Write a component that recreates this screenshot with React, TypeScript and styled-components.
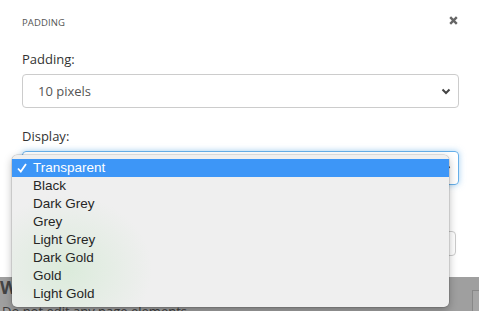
import React from "react";
import styled, { createGlobalStyle } from "styled-components";

const Global = createGlobalStyle`
  html, body { margin: 0; padding: 0; background: #9d9d9d; }
  body { width: 479px; height: 311px; overflow: hidden; font-family: "Open Sans", "Liberation Sans", sans-serif; }
  #root { position: relative; width: 479px; height: 311px; }
`;

const Page = styled.div`
  display: flex;
  flex-direction: column;
  width: 479px;
  height: 311px;
  position: relative;
`;

const Modal = styled.div`
  background: #fff;
  height: 277px;
  box-sizing: border-box;
  padding: 0 20px 0 22px;
  display: flex;
  flex-direction: column;
`;

const Header = styled.div`
  display: flex;
  justify-content: space-between;
  align-items: center;
  height: 44px;
  padding-right: 1px;
`;

const Title = styled.div`
  font-size: 9.5px;
  color: #555;
  letter-spacing: 0.1px;
  margin-top: 1px;
`;

const Close = styled.div`
  width: 9px;
  height: 9px;
  margin-top: -3px;
  display: flex;
  svg { display: block; }
`;

const Label = styled.div<{ $top: number }>`
  font-size: 13px;
  color: #333;
  line-height: 18px;
  margin-top: ${(p) => p.$top}px;
  margin-bottom: 6px;
`;

const Select = styled.div<{ $focus?: boolean }>`
  height: 34px;
  box-sizing: border-box;
  border: 1px solid ${(p) => (p.$focus ? "#66afe9" : "#ccc")};
  border-radius: 4px;
  box-shadow: ${(p) => (p.$focus ? "0 0 6px rgba(102,175,233,.6)" : "none")};
  display: flex;
  align-items: center;
  justify-content: space-between;
  padding: 0 7px 0 15px;
  font-size: 13px;
  color: #555;
`;

const Footer = styled.div`
  display: flex;
  justify-content: flex-end;
  margin-top: 46px;
  padding-right: 3px;
`;

const Button = styled.div`
  width: 90px;
  height: 25px;
  box-sizing: border-box;
  border: 1px solid #ccc;
  border-radius: 4px;
  background: #fff;
`;

const Backdrop = styled.div`
  flex: 1;
  background: #9f9f9f;
  position: relative;
  overflow: hidden;
  font-family: "Open Sans", "Liberation Sans", sans-serif;
  color: #3a3a3a;
`;

const BackHeading = styled.div`
  font-size: 18px;
  font-weight: 700;
  line-height: 20px;
  color: #444;
`;

const BackText = styled.div`
  font-size: 13px;
  line-height: 16px;
  margin-top: 6px;
  padding-left: 2px;
  color: #3c3c3c;
`;

const BackBox = styled.div`
  position: absolute;
  left: 472px;
  top: 13px;
  width: 40px;
  height: 40px;
  border: 1px solid #888;
  background: #a6a6a6;
`;

const Menu = styled.div`
  position: absolute;
  left: 12px;
  top: 155px;
  width: 437px;
  box-sizing: border-box;
  padding: 4px 0;
  border-radius: 5px;
  background:
    radial-gradient(ellipse 85px 75px at 55px 115px, rgba(214, 234, 214, 0.8), rgba(230, 240, 230, 0) 100%),
    #efefef;
  box-shadow: 0 0 0 0.5px rgba(0, 0, 0, 0.2), 0 3px 9px rgba(0, 0, 0, 0.28);
  font-family: "Liberation Sans", Arial, sans-serif;
  font-size: 13.5px;
  color: #222;
`;

const Item = styled.div<{ $sel?: boolean }>`
  height: 18px;
  line-height: 18px;
  display: flex;
  align-items: center;
  background: ${(p) => (p.$sel ? "#3d96f7" : "transparent")};
  color: ${(p) => (p.$sel ? "#fff" : "#262626")};
`;

const Check = styled.span`
  width: 21px;
  padding-left: 5px;
  box-sizing: border-box;
  display: inline-flex;
  align-items: center;
`;

const items = ["Transparent", "Black", "Dark Grey", "Grey", "Light Grey", "Dark Gold", "Gold", "Light Gold"];

export default function App() {
  return (
    <>
      <Global />
      <Page>
        <Modal>
          <Header>
            <Title>PADDING</Title>
            <Close>
              <svg width="9" height="9" viewBox="0 0 9 9">
                <path d="M1.2 1.2 L7.8 7.8 M7.8 1.2 L1.2 7.8" stroke="#666" strokeWidth="2.4" strokeLinecap="butt" />
              </svg>
            </Close>
          </Header>
          <Label $top={6}>Padding:</Label>
          <Select>
            <span>10 pixels</span>
            <svg width="10" height="7" viewBox="0 0 10 7">
              <path d="M1.5 1.5 L5 5 L8.5 1.5" fill="none" stroke="#444" strokeWidth="2" />
            </svg>
          </Select>
          <Label $top={19}>Display:</Label>
          <Select $focus>
            <span>Transparent</span>
            <svg width="10" height="7" viewBox="0 0 10 7">
              <path d="M1.5 1.5 L5 5 L8.5 1.5" fill="none" stroke="#444" strokeWidth="2" />
            </svg>
          </Select>
          <Footer>
            <Button />
          </Footer>
        </Modal>
        <Backdrop>
          <BackHeading>W</BackHeading>
          <BackText>Do not edit any page elements</BackText>
          <BackBox />
        </Backdrop>
        <Menu>
          {items.map((t, i) => (
            <Item key={t} $sel={i === 0}>
              <Check>
                {i === 0 && (
                  <svg width="10" height="10" viewBox="0 0 10 10">
                    <path d="M1 5.5 L3.8 8.5 L9 1" fill="none" stroke="#fff" strokeWidth="1.8" />
                  </svg>
                )}
              </Check>
              {t}
            </Item>
          ))}
        </Menu>
      </Page>
    </>
  );
}
